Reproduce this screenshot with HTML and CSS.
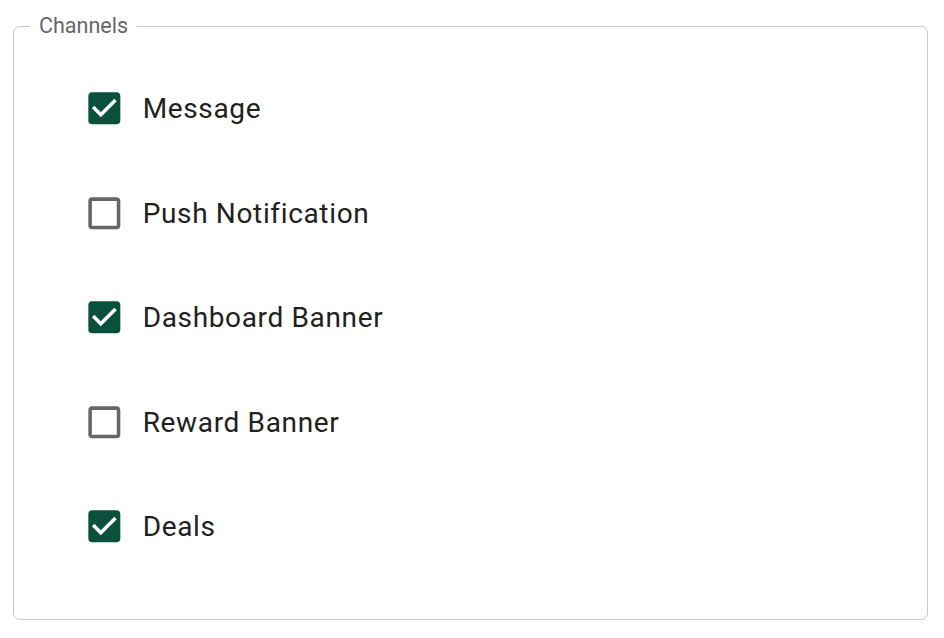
FILE: index.html
```html
<!DOCTYPE html>
<html>
<head>
<meta charset="utf-8">
<link rel="stylesheet" href="styles.css">
</head>
<body>
<div class="page">
  <fieldset class="channels">
    <legend class="channels-legend">Channels</legend>
    <div class="options">
      <label class="option">
        <svg class="cb checked" viewBox="0 0 24 24"><path d="M19 3H5c-1.11 0-2 .9-2 2v14c0 1.1.89 2 2 2h14c1.1 0 2-.9 2-2V5c0-1.1-.9-2-2-2zm-9 14l-5-5 1.410-1.410L10 14.170l7.590-7.590L19 8l-9 9z"/></svg>
        <span class="label">Message</span>
      </label>
      <label class="option">
        <svg class="cb" viewBox="0 0 24 24"><path d="M19 5v14H5V5h14m0-2H5c-1.11 0-2 .9-2 2v14c0 1.1.89 2 2 2h14c1.1 0 2-.9 2-2V5c0-1.1-.9-2-2-2z"/></svg>
        <span class="label">Push Notification</span>
      </label>
      <label class="option">
        <svg class="cb checked" viewBox="0 0 24 24"><path d="M19 3H5c-1.11 0-2 .9-2 2v14c0 1.1.89 2 2 2h14c1.1 0 2-.9 2-2V5c0-1.1-.9-2-2-2zm-9 14l-5-5 1.410-1.410L10 14.170l7.590-7.590L19 8l-9 9z"/></svg>
        <span class="label">Dashboard Banner</span>
      </label>
      <label class="option">
        <svg class="cb" viewBox="0 0 24 24"><path d="M19 5v14H5V5h14m0-2H5c-1.11 0-2 .9-2 2v14c0 1.1.89 2 2 2h14c1.1 0 2-.9 2-2V5c0-1.1-.9-2-2-2z"/></svg>
        <span class="label">Reward Banner</span>
      </label>
      <label class="option">
        <svg class="cb checked" viewBox="0 0 24 24"><path d="M19 3H5c-1.11 0-2 .9-2 2v14c0 1.1.89 2 2 2h14c1.1 0 2-.9 2-2V5c0-1.1-.9-2-2-2zm-9 14l-5-5 1.410-1.410L10 14.170l7.590-7.590L19 8l-9 9z"/></svg>
        <span class="label">Deals</span>
      </label>
    </div>
  </fieldset>
</div>
</body>
</html>
```
FILE: styles.css
```css
html, body {
  margin: 0;
  padding: 0;
  background: #ffffff;
  font-family: Roboto, "Liberation Sans", sans-serif;
}
.page {
  padding: 16px 16px 0 13px;
  width: 915px;
}
.channels {
  margin: 0;
  padding: 0 0 41px 0;
  border: 1px solid #c8c8c8;
  border-radius: 7px;
  min-width: 0;
  box-sizing: border-box;
  width: 915px;
  height: 604px;
}
.channels-legend {
  margin-left: 16px;
  padding: 0 9px;
  font-size: 21.5px;
  line-height: 20px;
  color: #666666;
}
.options {
  display: flex;
  flex-direction: column;
  gap: 61.5px;
  padding-top: 51px;
  padding-left: 69px;
}
.option {
  display: flex;
  align-items: center;
  gap: 17px;
  height: 43px;
}
.cb {
  width: 42.67px;
  height: 42.67px;
  fill: #666666;
  flex: none;
}
.cb.checked {
  fill: #0b503d;
}
.label {
  font-size: 28px;
  color: #212121;
  letter-spacing: 0.65px;
}
```
